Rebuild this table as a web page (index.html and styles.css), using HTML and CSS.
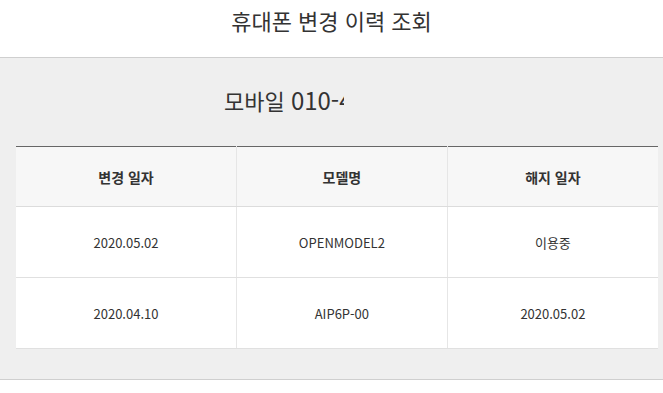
FILE: index.html
```html
<!DOCTYPE html>
<html lang="ko">
<head>
<meta charset="utf-8">
<link rel="stylesheet" href="styles.css">
</head>
<body>
<header class="top">
  <h1 class="title">휴대폰 변경 이력 조회</h1>
</header>
<section class="panel">
  <div class="phone"><span class="phone-text">모바일 <span class="phone-num">010-4567-8901</span></span></div>
  <table class="history">
    <thead>
      <tr><th class="c1">변경 일자</th><th>모델명</th><th>해지 일자</th></tr>
    </thead>
    <tbody>
      <tr><td>2020.05.02</td><td>OPENMODEL2</td><td>이용중</td></tr>
      <tr><td>2020.04.10</td><td>AIP6P-00</td><td>2020.05.02</td></tr>
    </tbody>
  </table>
</section>
</body>
</html>
```
FILE: styles.css
```css
html, body {
  margin: 0;
  padding: 0;
  background: #fff;
  font-family: "Noto Sans CJK KR", "Noto Sans", sans-serif;
  color: #333;
}
.top {
  height: 57px;
  border-bottom: 1px solid #cfcfcf;
  box-sizing: content-box;
}
.title {
  margin: 0;
  height: 40px;
  line-height: 40px;
  text-align: center;
  font-size: 22px;
  font-weight: 400;
  color: #333;
}
.panel {
  background: #efefef;
  padding: 0 5px 30px 16px;
  border-bottom: 1px solid #cfcfcf;
}
.phone {
  height: 88px;
  box-sizing: border-box;
  padding: 0 0 4px 208px;
  line-height: 84px;
}
.phone-text {
  display: inline-block;
  vertical-align: top;
  width: 120px;
  overflow: hidden;
  white-space: nowrap;
  font-size: 22px;
  color: #333;
}
.phone-num {
  font-size: 24px;
}
.history {
  width: 100%;
  border-collapse: collapse;
  background: #fff;
  border-top: 1px solid #666;
  table-layout: fixed;
}
.history th {
  height: 59px;
  background: #f7f7f7;
  font-size: 14px;
  font-weight: 700;
  color: #333;
  border-bottom: 1px solid #dcdcdc;
  border-left: 1px solid #e6e6e6;
  padding: 0;
}
.history th.c1 {
  width: 220px;
}
.history td {
  height: 70px;
  text-align: center;
  font-size: 13px;
  color: #333;
  border-bottom: 1px solid #e0e0e0;
  border-left: 1px solid #e6e6e6;
  padding: 0;
}
.history th:first-child,
.history td:first-child {
  border-left: none;
}
```
